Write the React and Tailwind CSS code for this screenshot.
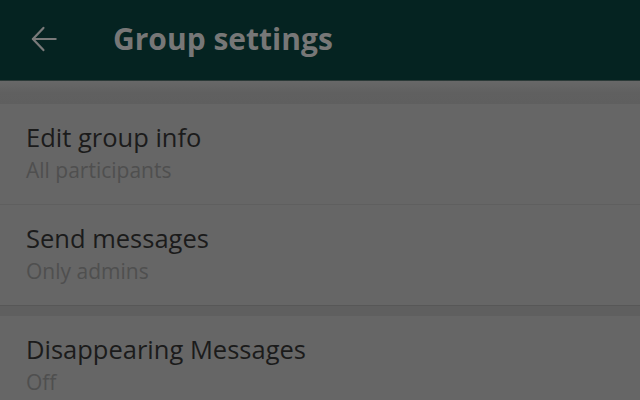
import React from 'react';

function Row({ title, subtitle, divider }) {
  return (
    <div className={`pl-[26px] pt-[17px] pb-[20px] ${divider ? 'border-b border-[#5f5f5f]' : ''}`}>
      <div className="text-[25.5px] leading-[32px] text-[#1b1b1b]">{title}</div>
      <div className="mt-[3px] text-[21px] leading-[28px] text-[#4f4f4f]">{subtitle}</div>
    </div>
  );
}

export default function App() {
  return (
    <div className="w-[640px] h-[400px] overflow-hidden bg-[#666666]" style={{ fontFamily: '"Open Sans", "Noto Sans", sans-serif' }}>
      {/* header */}
      <div className="h-[81px] bg-[#052321] flex items-center pb-[3px] border-b border-[#2c3a38]">
        <svg className="ml-[30px] w-[28px] h-[28px]" viewBox="0 0 24 24" fill="none" stroke="#7a7a7a" strokeWidth="1.9" strokeLinecap="round" strokeLinejoin="round">
          <path d="M22 12H2.5" />
          <path d="M11.5 2.5L2.5 12l9 9.5" />
        </svg>
        <div className="ml-[55px] text-[30px] font-bold text-[#777777]">Group settings</div>
      </div>
      <div className="h-[23px] bg-gradient-to-b from-[#686868] via-[#606060] to-[#5f5f5f]" />

      <div className="bg-[#666666] border-b border-[#575757]">
        <Row title="Edit group info" subtitle="All participants" divider />
        <Row title="Send messages" subtitle="Only admins" />
      </div>
      <div className="h-[10px] bg-[#5f5f5f]" />

      <div className="bg-[#666666]">
        <Row title="Disappearing Messages" subtitle="Off" />
      </div>
    </div>
  );
}
